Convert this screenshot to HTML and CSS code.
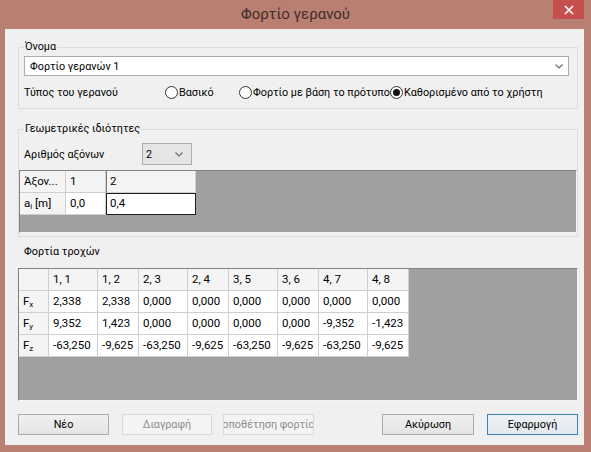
FILE: index.html
```html
<!DOCTYPE html>
<html lang="el">
<head>
<meta charset="utf-8">
<title>Φορτίο γερανού</title>
<link rel="stylesheet" href="styles.css">
</head>
<body>
<div class="window">
  <div class="titlebar">
    <span class="tb-spacer"></span>
    <span class="title">Φορτίο γερανού</span>
    <span class="tb-right">
      <span class="close"><svg width="10" height="10" viewBox="0 0 10 10"><path d="M1 1 L9 9 M9 1 L1 9" stroke="#fff" stroke-width="1.6" fill="none"/></svg></span>
    </span>
  </div>
  <div class="client">
    <fieldset class="group g-name">
      <legend>Όνομα</legend>
      <div class="combo combo-name">
        <span class="combo-text">Φορτίο γερανών 1</span>
        <svg class="chev" width="8" height="5" viewBox="0 0 8 5"><path d="M0.5 0.5 L4 4 L7.5 0.5" stroke="#6d6d6d" stroke-width="1.2" fill="none"/></svg>
      </div>
      <div class="type-row">
        <span class="type-label">Τύπος του γερανού</span>
        <span class="radio r1"><span class="circle"></span><span class="rtext">Βασικό</span></span>
        <span class="radio r2"><span class="circle"></span><span class="rtext">Φορτίο με βάση το πρότυπο</span></span>
        <span class="radio r3"><span class="circle checked"></span><span class="rtext">Καθορισμένο από το χρήστη</span></span>
      </div>
    </fieldset>

    <fieldset class="group g-geo">
      <legend>Γεωμετρικές ιδιότητες</legend>
      <div class="axis-row">
        <span class="axis-label">Αριθμός αξόνων</span>
        <div class="combo combo-axis">
          <span class="combo-text">2</span>
          <svg class="chev" width="8" height="5" viewBox="0 0 8 5"><path d="M0.5 0.5 L4 4 L7.5 0.5" stroke="#6d6d6d" stroke-width="1.2" fill="none"/></svg>
        </div>
      </div>
      <div class="grid grid-axes">
        <div class="cells cells-axes">
          <div class="c hdr">Άξον...</div>
          <div class="c hdr">1</div>
          <div class="c hdr cur">2</div>
          <div class="c hdr">a<sub>i</sub> [m]</div>
          <div class="c">0,0</div>
          <div class="c edit">0,4</div>
        </div>
      </div>
    </fieldset>

    <div class="sec-label">Φορτία τροχών</div>
    <div class="grid grid-loads">
      <div class="cells cells-loads">
        <div class="c hdr"></div>
        <div class="c hdr">1, 1</div>
        <div class="c hdr">1, 2</div>
        <div class="c hdr">2, 3</div>
        <div class="c hdr">2, 4</div>
        <div class="c hdr">3, 5</div>
        <div class="c hdr">3, 6</div>
        <div class="c hdr">4, 7</div>
        <div class="c hdr">4, 8</div>

        <div class="c hdr">F<sub>x</sub></div>
        <div class="c">2,338</div>
        <div class="c">2,338</div>
        <div class="c">0,000</div>
        <div class="c">0,000</div>
        <div class="c">0,000</div>
        <div class="c">0,000</div>
        <div class="c">0,000</div>
        <div class="c">0,000</div>

        <div class="c hdr">F<sub>y</sub></div>
        <div class="c">9,352</div>
        <div class="c">1,423</div>
        <div class="c">0,000</div>
        <div class="c">0,000</div>
        <div class="c">0,000</div>
        <div class="c">0,000</div>
        <div class="c">-9,352</div>
        <div class="c">-1,423</div>

        <div class="c hdr">F<sub>z</sub></div>
        <div class="c">-63,250</div>
        <div class="c">-9,625</div>
        <div class="c">-63,250</div>
        <div class="c">-9,625</div>
        <div class="c">-63,250</div>
        <div class="c">-9,625</div>
        <div class="c">-63,250</div>
        <div class="c">-9,625</div>
      </div>
    </div>

    <div class="buttons">
      <button class="btn b-new">Νέο</button>
      <button class="btn b-del" disabled>Διαγραφή</button>
      <button class="btn b-place" disabled><span>Τοποθέτηση φορτίου</span></button>
      <span class="btn-spacer"></span>
      <button class="btn b-cancel">Ακύρωση</button>
      <button class="btn b-apply">Εφαρμογή</button>
    </div>
  </div>
</div>
</body>
</html>
```

FILE: styles.css
```css
* { box-sizing: border-box; }
html, body { margin: 0; padding: 0; }
body {
  width: 591px;
  height: 452px;
  overflow: hidden;
  background: #b97f73;
  font-family: Roboto, "Liberation Sans", sans-serif;
  font-size: 10.8px;
  color: #000;
}
.window {
  width: 591px;
  height: 452px;
  display: flex;
  flex-direction: column;
}
.titlebar {
  height: 29px;
  display: grid;
  grid-template-columns: 1fr auto 1fr;
  align-items: start;
}
.title {
  font-size: 15px;
  line-height: 29px;
  color: #3f2d29;
}
.tb-right {
  display: flex;
  justify-content: flex-end;
  padding-right: 7px;
}
.close {
  width: 31px;
  height: 19px;
  background: #c7504f;
  display: flex;
  align-items: center;
  justify-content: center;
}
.close svg { display: block; }
.client {
  margin: 0 7px 0 5px;
  height: 416px;
  background: #f0f0f0;
  padding: 0 6px 0 13px;
  display: flex;
  flex-direction: column;
}
.group {
  margin: 0;
  padding: 0;
  border: 1px solid #dcdcdc;
  min-width: 0;
}
.group legend {
  margin-left: 5px;
  padding: 0 1px;
  line-height: 14px;
  color: #000;
}
.g-name { margin-top: 11px; }
.g-geo { margin-top: 13px; }

.combo {
  display: flex;
  align-items: center;
  border: 1px solid #acacac;
  background: #fff;
}
.combo .combo-text { flex: 1; }
.combo .chev { flex: none; }
.combo-name {
  margin: 2px 8px 0 5px;
  height: 20px;
  padding: 0 5px 0 5px;
}
.type-row {
  margin: 6px 0 6px 5px;
  height: 20px;
  display: flex;
  align-items: center;
  white-space: nowrap;
}
.type-label { width: 141px; flex: none; }
.radio { display: flex; align-items: center; flex: none; }
.r1 { width: 74px; }
.r2 { width: 151px; }
.circle {
  width: 13px;
  height: 13px;
  border-radius: 50%;
  border: 1px solid #333;
  background: #fff;
  margin-right: 1px;
  display: flex;
  align-items: center;
  justify-content: center;
  flex: none;
}
.circle.checked::before {
  content: "";
  width: 7px;
  height: 7px;
  border-radius: 50%;
  background: #111;
}

.axis-row {
  margin: 7px 0 0 5px;
  height: 22px;
  display: flex;
  align-items: center;
}
.axis-label { width: 118px; flex: none; }
.combo-axis {
  width: 50px;
  height: 22px;
  background: #e5e5e5;
  padding: 0 8px 0 3px;
}

.grid {
  background: #a0a0a0;
  border: 1px solid;
  border-color: #828282 #f5f5f5 #f5f5f5 #828282;
}
.grid-axes {
  margin: 5px 0 3px 0;
  height: 63px;
}
.cells {
  display: grid;
  grid-auto-rows: 22px;
  width: max-content;
}
.cells-axes { grid-template-columns: 46px 40px 90px; }
.cells-loads { grid-template-columns: 30px 49px 41px 49px 41px 49px 41px 49px 41px; }
.c {
  background: #fff;
  border-right: 1px solid #cfcfcf;
  border-bottom: 1px solid #cfcfcf;
  padding: 0 0 0 4px;
  white-space: nowrap;
  overflow: hidden;
  line-height: 21px;
  font-size: 11.5px;
}
.c.hdr { background: #f4f4f4; }
.c.cur { border-left: 1px solid #7a7a7a; padding-left: 3px; }
.c.edit {
  border: 1px solid #1e1e1e;
  line-height: 14px;
  padding: 2px 0 0 3px;
}
sub {
  font-size: 8px;
  vertical-align: -2px;
  line-height: 0;
}

.sec-label {
  margin: 8px 0 0 6px;
  line-height: 14px;
}
.grid-loads {
  margin-top: 9px;
  height: 133px;
}

.buttons {
  margin-top: 13px;
  height: 21px;
  display: flex;
}
.btn {
  font: inherit;
  height: 21px;
  padding: 0;
  border: 1px solid #acacac;
  background: linear-gradient(#f0f0f0, #e5e5e5);
  color: #000;
  display: flex;
  align-items: center;
  justify-content: center;
  overflow: hidden;
  white-space: nowrap;
}
.btn:disabled {
  background: #f4f4f4;
  border-color: #d9d9d9;
  color: #8d8d8d;
}
.b-new { width: 91px; }
.b-del { width: 90px; margin-left: 13px; }
.b-place { width: 91px; margin-left: 11px; }
.b-place span { flex: none; }
.btn-spacer { flex: 1; }
.b-cancel { width: 92px; }
.b-apply { width: 91px; margin-left: 13px; border-color: #3c7fb1; background: linear-gradient(#ecf1f5, #e2e8ed); }
```
